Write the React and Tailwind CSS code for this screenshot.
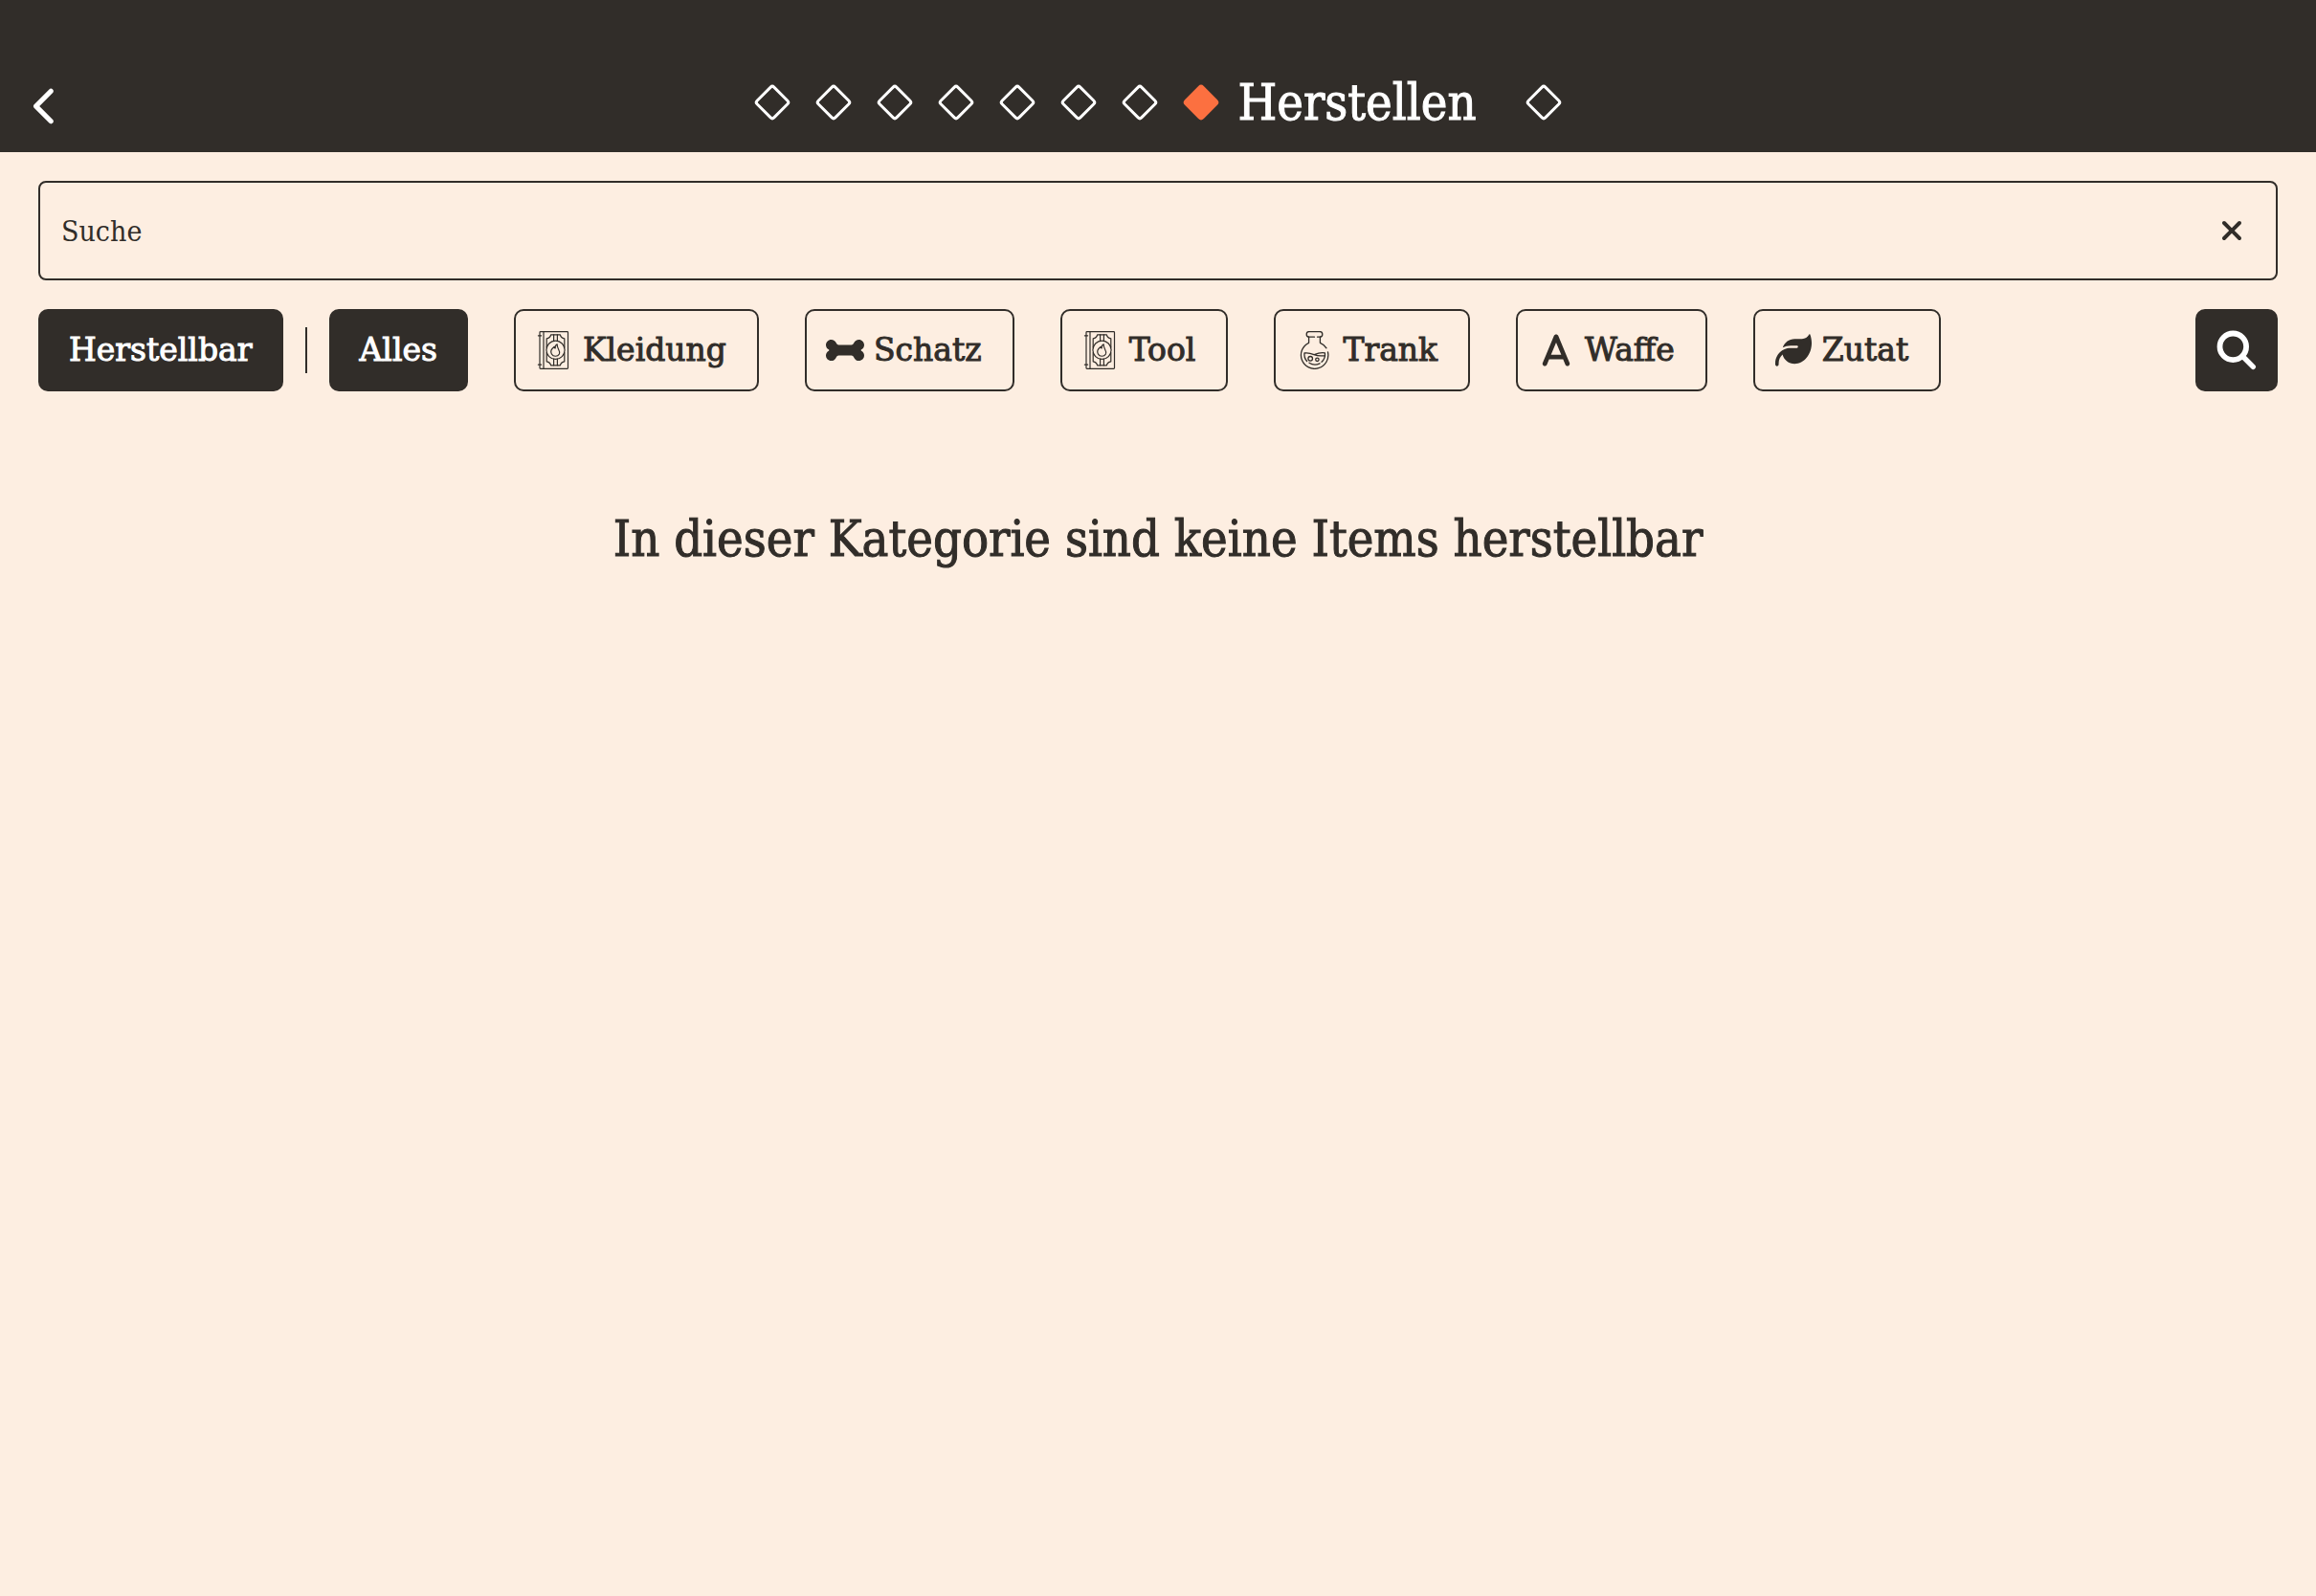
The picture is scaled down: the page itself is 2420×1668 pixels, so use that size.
import React from "react";
import { FaA, FaBone, FaChevronLeft, FaLeaf, FaXmark } from "react-icons/fa6";

function SpellBook() {
  return (
    <svg viewBox="0 0 40 40" className="h-10 w-10" fill="none" stroke="currentColor" strokeWidth="1.2" strokeLinejoin="round" strokeLinecap="round" aria-hidden="true">
      <rect x="5" y="0.6" width="29.5" height="38.8" rx="0.8" />
      <path d="M9 0.6v38.8M3.4 4.8h3.2M3.4 35.2h3.2" />
      <circle cx="21.5" cy="19.8" r="9.6" />
      <path d="M12.2 17V7.8c2.4-.4 4-1.8 4.4-4h9.8c.4 2.2 2 3.6 4.4 4V17M12.2 22.6v9.2c2.4.4 4 1.8 4.4 4h9.8c.4-2.2 2-3.6 4.4-4v-9.2" />
      <path d="M19.6 3.8v6.6M23.4 3.8v6.6M19.6 29.2v6.6M23.4 29.2v6.6" />
      <path d="M23.2 13.8c-1.8 1-2.4 2.6-2 4.2-.8-.2-1.2-.8-1.2-1.6-3 2.2-4 5-2.6 7.600 1.600 3 6.400 3 8 0 1.800-3.600-2.800-5.400-2.200-10.200z" />
    </svg>
  );
}

function Flask() {
  return (
    <svg viewBox="0 0 40 40" className="h-10 w-10" fill="none" stroke="currentColor" strokeWidth="1.3" strokeLinejoin="round" strokeLinecap="round" aria-hidden="true">
      <path d="M20.5 6.2h-5.500a2.800 2.800 0 0 1 0-5.600h11a2.800 2.800 0 0 1 0 5.600H23.500" />
      <path d="M14.600 6.200v6.100a14.200 14.200 0 1 0 19.900 9.700M26.400 6.200v6.100a14.200 14.200 0 0 1 6.600 5.500" />
      <path d="M12.600 31.500a10.800 10.800 0 0 1-2.600-8.500c3.600-.6 6.600.2 10 1.600 3.600 1.400 7.400 1.600 11.400 1M21 24.400c3.400-1.600 6.800-2 10.400-1.600a10.800 10.800 0 0 1-3.400 9.400M26 33.800a10.800 10.800 0 0 1-11-.6" />
      <circle cx="16.200" cy="28.800" r="2.300" />
      <circle cx="23.400" cy="29.800" r="1.700" />
    </svg>
  );
}

function Magnifier() {
  return (
    <svg viewBox="0 0 42 42" className="h-[42px] w-[42px]" fill="none" stroke="currentColor" strokeLinecap="round" aria-hidden="true">
      <circle cx="17.300" cy="17.300" r="13.800" strokeWidth="5.800" />
      <path d="M28 28l10.300 10.300" strokeWidth="5.400" />
    </svg>
  );
}

const categories = [
  { label: "Kleidung", icon: <SpellBook /> },
  { label: "Schatz", icon: <FaBone className="h-10 w-10" aria-hidden="true" /> },
  { label: "Tool", icon: <SpellBook /> },
  { label: "Trank", icon: <Flask /> },
  { label: "Waffe", icon: <FaA className="h-[38px] w-10" aria-hidden="true" /> },
  { label: "Zutat", icon: <FaLeaf className="h-[38px] w-10" aria-hidden="true" /> },
];

const pagesBefore = ["Seite 1", "Seite 2", "Seite 3", "Seite 4", "Seite 5", "Seite 6", "Seite 7"];

function PageDot({ label }) {
  return (
    <button type="button" aria-label={label} className="flex h-16 w-16 items-center justify-center">
      <span className="h-7 w-7 rotate-45 rounded-[4px] border-3 border-white" />
    </button>
  );
}

export default function App() {
  return (
    <div className="min-h-screen bg-[#fdeee1] font-['DejaVu_Serif',serif] text-[#312d29]">
      <header className="grid grid-cols-[1fr_auto_1fr] items-center bg-[#312d29] pt-[75px] pb-5 text-white">
        <button type="button" aria-label="Zurück" className="mt-2 ml-[26px] flex h-11 w-11 items-center justify-center">
          <FaChevronLeft className="h-[42px] w-[42px]" />
        </button>
        <nav aria-label="Seiten" className="flex items-center">
          {pagesBefore.map((label) => (
            <PageDot key={label} label={label} />
          ))}
          <button type="button" aria-current="page" className="flex h-16 items-center pr-[38px]">
            <span className="flex w-16 justify-center">
              <span className="h-7 w-7 rotate-45 rounded-[4px] bg-[#fc7040]" />
            </span>
            <span className="pl-[6px] font-['DejaVu_Serif_Condensed','DejaVu_Serif',serif] text-[52px] leading-[64px] [-webkit-text-stroke:1px]">Herstellen</span>
          </button>
          <PageDot label="Seite 9" />
        </nav>
      </header>

      <main className="flex flex-col gap-[30px] px-10 pt-[30px]">
        <div className="flex h-[104px] items-center rounded-lg border-2 border-[#312d29] pr-[26px]">
          <input
            type="text"
            aria-label="Suche"
            placeholder="Suche"
            className="h-full min-w-0 flex-1 bg-transparent pl-[22px] font-['DejaVu_Serif_Condensed','DejaVu_Serif',serif] text-[30px] outline-none placeholder:text-[#312d29]"
          />
          <button type="button" aria-label="Suche leeren" className="flex h-10 w-10 items-center justify-center">
            <FaXmark className="h-8 w-8" />
          </button>
        </div>

        <div className="flex items-center text-[33px] leading-[40px]">
          <button type="button" aria-pressed="true" className="h-[86px] rounded-[10px] bg-[#312d29] px-8 text-white [-webkit-text-stroke:1px]">
            Herstellbar
          </button>
          <div className="mx-[23px] h-12 w-[2px] bg-[#312d29]" />
          <div className="flex items-center gap-12">
            <button type="button" aria-pressed="true" className="h-[86px] rounded-[10px] bg-[#312d29] px-8 text-white [-webkit-text-stroke:1px]">
              Alles
            </button>
            {categories.map(({ label, icon }) => (
              <button
                key={label}
                type="button"
                aria-pressed="false"
                className="flex h-[86px] items-center gap-[10px] rounded-[10px] border-2 border-[#312d29] pr-8 pl-5"
              >
                {icon}
                <span className="[-webkit-text-stroke:1px]">{label}</span>
              </button>
            ))}
          </div>
          <button type="button" aria-label="Suchen" className="ml-auto flex h-[86px] w-[86px] items-center justify-center rounded-[10px] bg-[#312d29] text-white">
            <Magnifier />
          </button>
        </div>

        <p className="pt-[90px] text-center font-['DejaVu_Serif_Condensed','DejaVu_Serif',serif] text-[52px] leading-[68px] [-webkit-text-stroke:1px]">
          In dieser Kategorie sind keine Items herstellbar
        </p>
      </main>
    </div>
  );
}
